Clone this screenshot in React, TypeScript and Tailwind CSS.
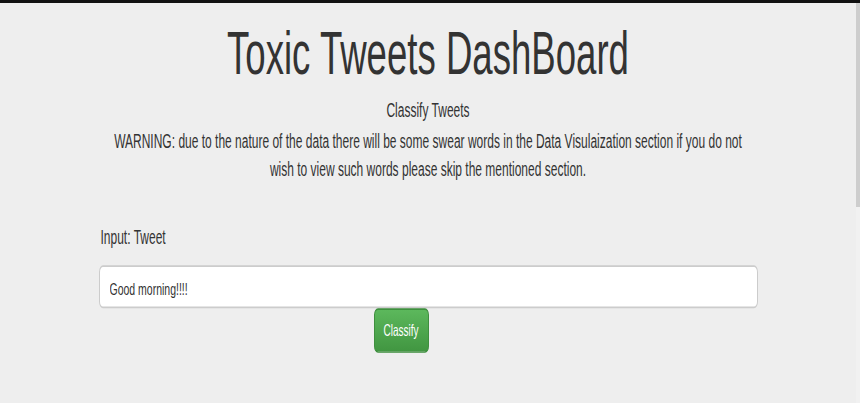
export default function App() {
  return (
    <div className="h-[403px] overflow-hidden bg-[#eeeeee] font-['Liberation_Sans',Arial,sans-serif] text-[#333333]">
      <div className="h-[3px] bg-[#111111]" />
      <div className="flex h-[400px]">
        <main className="min-w-0 flex-1">
          {/* the reference is stretched vertically, so the whole block is scaled on y */}
          <div className="origin-top scale-y-[1.65] pt-[2px]">
            <h1 className="mt-[11px] text-center text-[36.6px] leading-[36px] font-normal">
              Toxic Tweets DashBoard
            </h1>
            <p className="mt-[8px] text-center text-[12px] leading-[17px]">Classify Tweets</p>
            <p className="mx-auto mt-[2px] w-[640px] text-center text-[12px] leading-[17px]">
              WARNING: due to the nature of the data there will be some swear words in the Data
              Visulaization section if you do not wish to view such words please skip the
              mentioned section.
            </p>
            <div className="mx-auto mt-[24.3px] w-[659px]">
              <label className="block pl-[2px] text-[12px] leading-[17px]">Input: Tweet</label>
              <input
                className="mt-[8px] block h-[26px] w-full rounded-[4px] border border-[#cccccc] bg-white px-[10px] pt-[2px] text-[10.5px] text-[#333333] outline-none"
                defaultValue="Good morning!!!!"
              />
              <button className="ml-[275px] flex h-[27px] w-[55px] items-center justify-center rounded-[4px] border border-[#3e8f3e] bg-linear-to-b from-[#5cb85c] to-[#419641] text-[10px] text-white">
                Classify
              </button>
            </div>
          </div>
        </main>
        <div className="flex w-[4px] flex-col">
          <div className="h-[204px] bg-[#cdcdcd]" />
          <div className="flex-1 bg-[#f1f1f1]" />
        </div>
      </div>
    </div>
  );
}
